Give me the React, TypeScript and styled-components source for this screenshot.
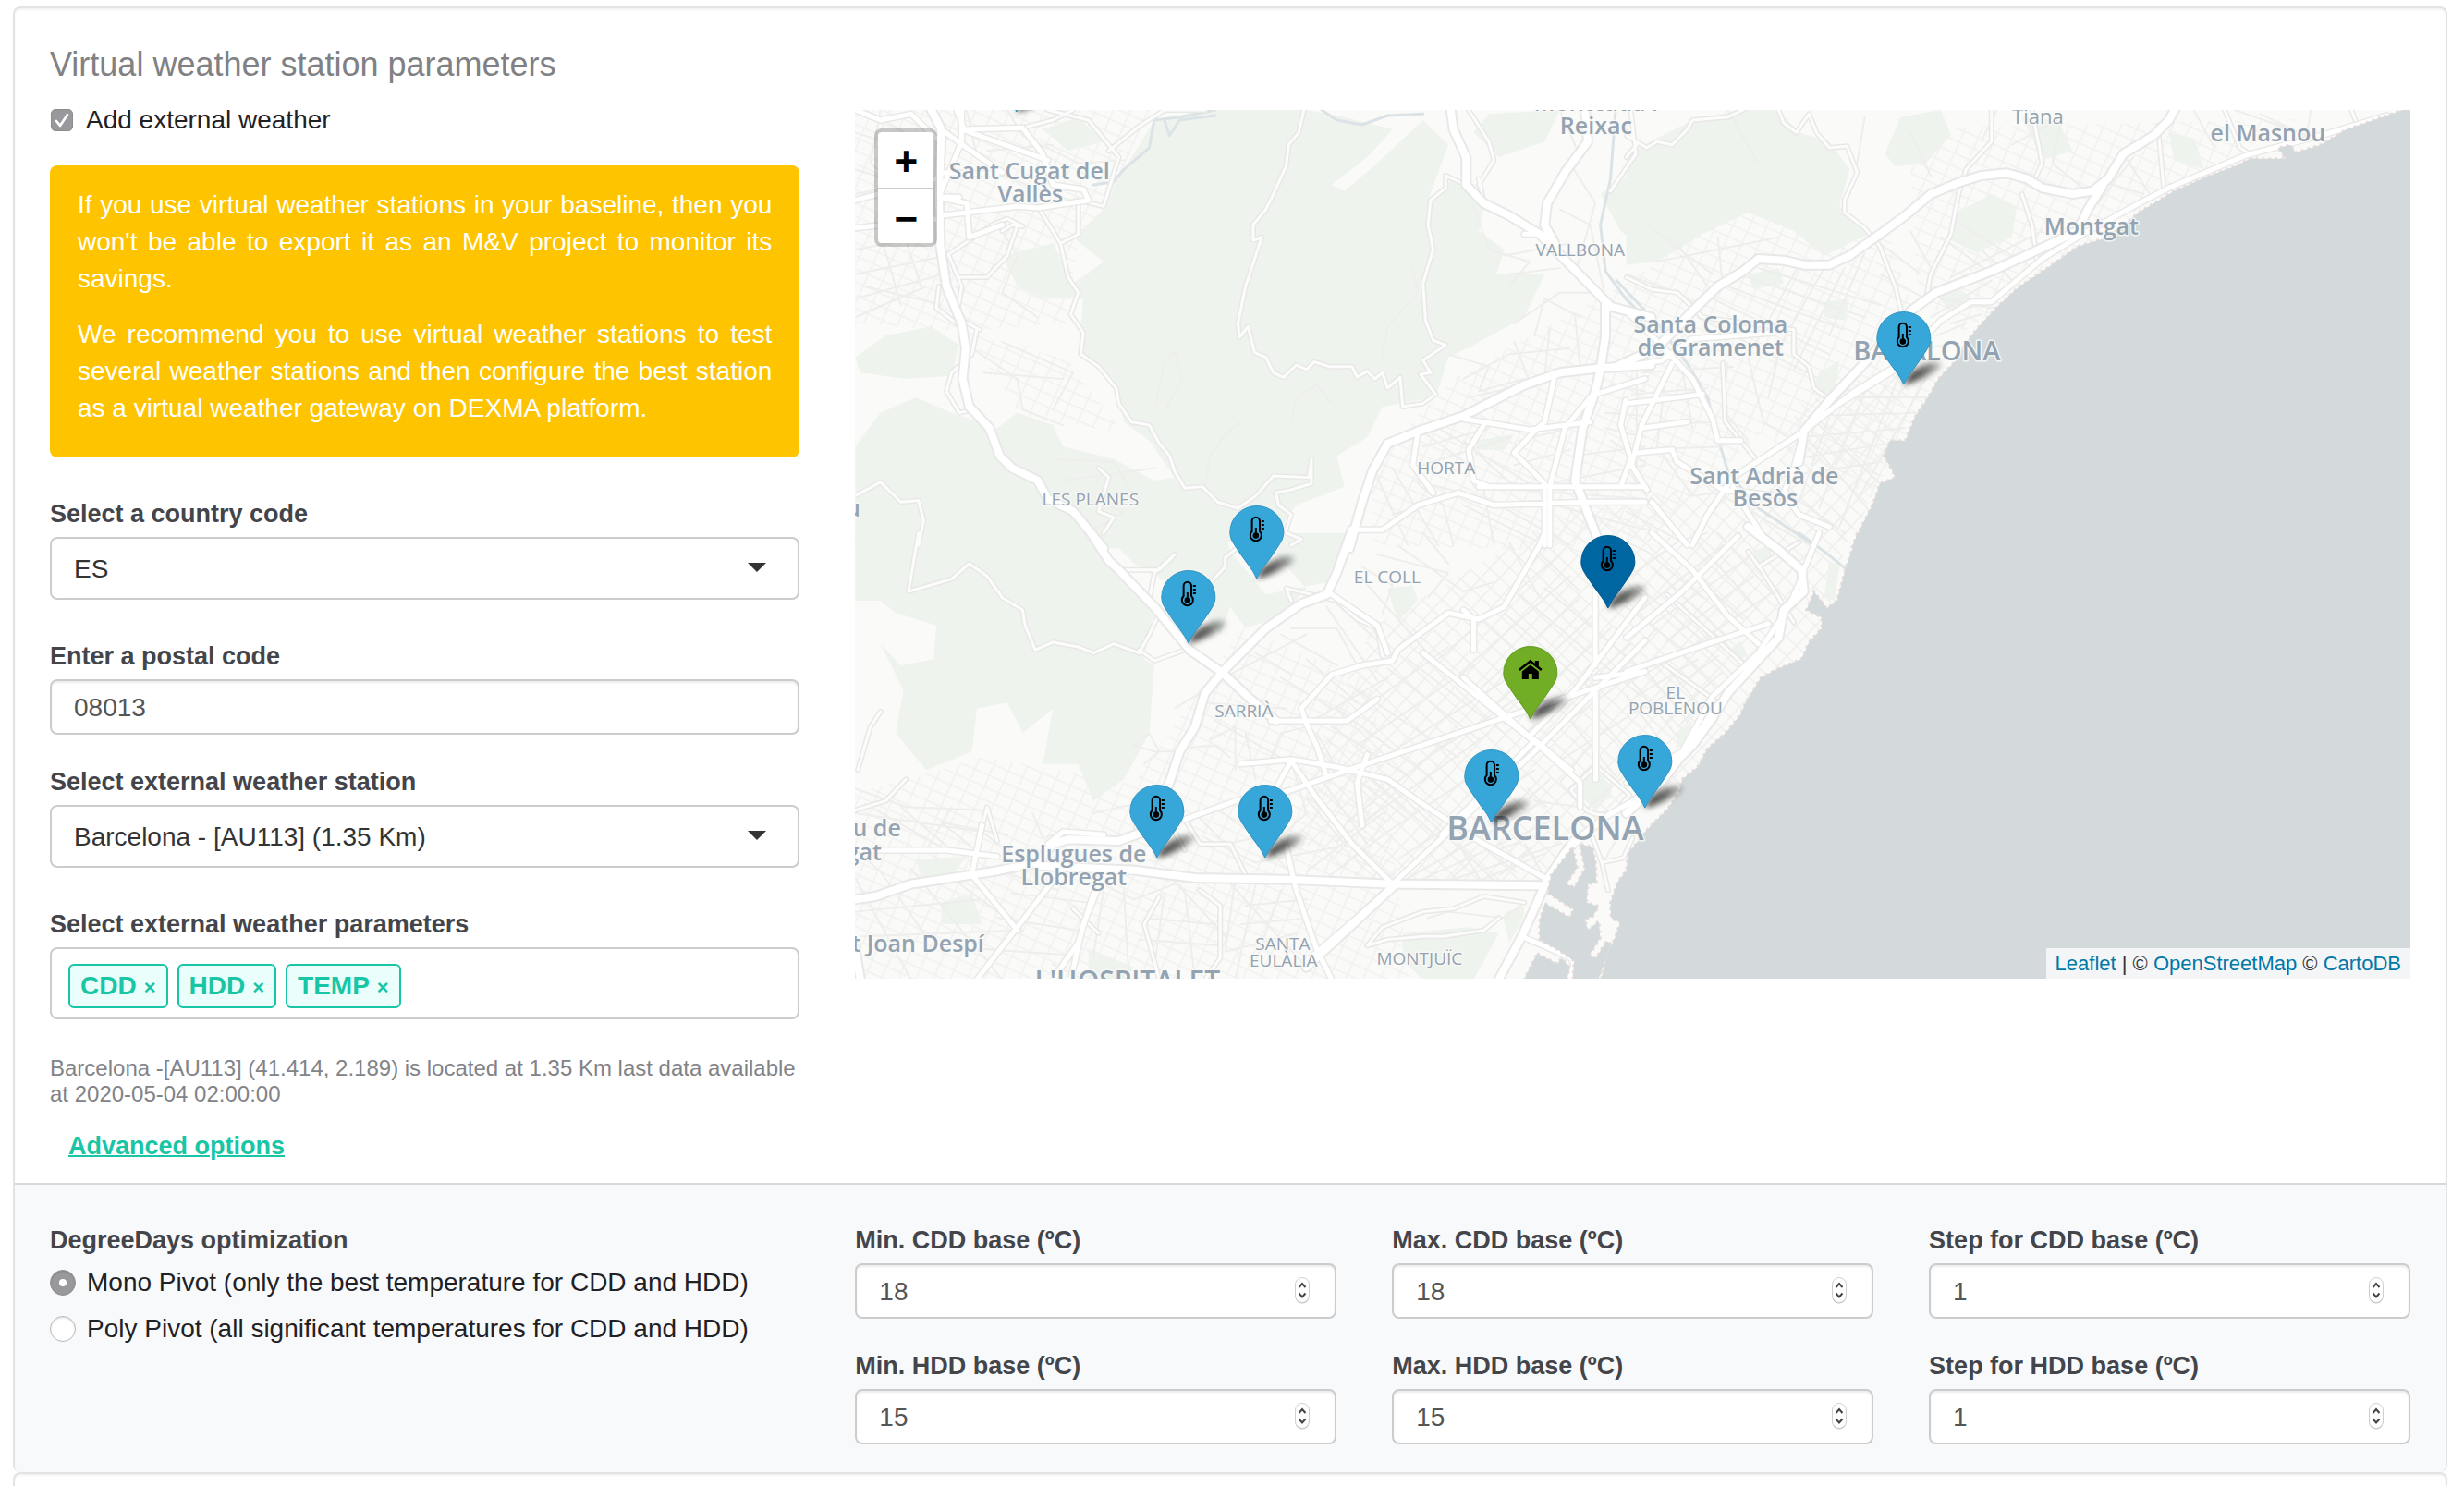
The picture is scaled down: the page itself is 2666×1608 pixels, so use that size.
import React, { useState } from "react";
import styled, { createGlobalStyle, css } from "styled-components";

const GlobalStyle = createGlobalStyle`
  *, *::before, *::after { box-sizing: border-box; }
  body {
    margin: 0;
    background: #fff;
    color: #212529;
    font-family: "Liberation Sans", Arial, Helvetica, sans-serif;
    font-size: 28px;
  }
  input, select, button { font: inherit; margin: 0; }
`;

const Page = styled.main`
  display: flex;
  flex-direction: column;
  min-height: 100vh;
  padding: 7px 18px 0 14px;
`;

const Panel = styled.section<{ $grow?: boolean }>`
  border: 2px solid #e3e3e3;
  border-bottom: 0;
  border-radius: 8px;
  box-shadow: inset 0 2px 2px rgba(0, 0, 0, 0.05);
  overflow: hidden;
  ${(p) =>
    p.$grow &&
    css`
      flex: 1;
      border-bottom-left-radius: 0;
      border-bottom-right-radius: 0;
    `}
`;

const Columns = styled.div`
  display: grid;
  grid-template-columns: repeat(12, minmax(0, 1fr));
  column-gap: 60px;
`;

const Side = styled.div`
  grid-column: span 4;
`;

const Wide = styled.div`
  grid-column: span 8;
`;

const Upper = styled.div`
  padding: 41px 38px 25px;
`;

const Advanced = styled.div`
  padding: 45px 38px 30px;
  border-top: 2px solid #d6d8db;
  background: #f8f9fb;
`;

const Title = styled.h1`
  margin: 0 0 29px;
  color: #808184;
  font-size: 36px;
  font-weight: 400;
  line-height: 40px;
`;

const CheckRow = styled.div`
  display: flex;
  align-items: center;
  gap: 14px;
  height: 22px;
  margin-bottom: 38px;
  padding-left: 1px;
`;

const CheckBoxHolder = styled.span`
  position: relative;
  display: flex;
  svg {
    position: absolute;
    inset: 0;
    pointer-events: none;
  }
`;

const CheckBox = styled.input`
  appearance: none;
  width: 24px;
  height: 24px;
  border: 1px solid #8b8b90;
  border-radius: 5px;
  background: #98989d;
`;

const ChoiceLabel = styled.label`
  color: #1f2124;
  line-height: 22px;
`;

const Alert = styled.div`
  margin-bottom: 46px;
  padding: 23px 30px 13px;
  border-radius: 8px;
  background: #ffc400;
  color: #fff;
  line-height: 40px;
  text-align: justify;
  p {
    margin: 0 0 20px;
  }
`;

const Field = styled.div<{ $after?: number }>`
  display: flex;
  flex-direction: column;
  gap: 10px;
  margin-bottom: ${(p) => p.$after ?? 0}px;
`;

const labelText = css`
  color: #43454a;
  font-size: 27px;
  font-weight: 700;
  line-height: 30px;
`;

const Label = styled.label`
  ${labelText}
`;

const frame = css`
  width: 100%;
  border: 2px solid #ccc;
  border-radius: 8px;
  background: #fff;
`;

const SelectHolder = styled.div`
  position: relative;
  svg {
    position: absolute;
    right: 36px;
    top: 28px;
    pointer-events: none;
  }
`;

const Select = styled.select`
  ${frame}
  appearance: none;
  height: 68px;
  padding: 0 24px;
  color: #333;
`;

const TextInput = styled.input`
  ${frame}
  appearance: textfield;
  height: 60px;
  padding: 2px 24px 0;
  color: #555;
  box-shadow: inset 0 2px 2px rgba(0, 0, 0, 0.075);
  &::-webkit-inner-spin-button,
  &::-webkit-outer-spin-button {
    appearance: none;
    margin: 0;
  }
`;

const TagBox = styled.div`
  ${frame}
  display: flex;
  align-items: flex-start;
  gap: 10px;
  height: 78px;
  padding: 16px 18px 0;
`;

const Tag = styled.span`
  display: flex;
  align-items: center;
  gap: 8px;
  height: 48px;
  padding: 0 11px;
  border: 2px solid #18c5a5;
  border-radius: 6px;
  background: #eafffb;
  color: #18c5a5;
  font-weight: 700;
`;

const TagRemove = styled.button`
  padding: 4px 0 0;
  border: 0;
  background: none;
  color: inherit;
  font-size: 22px;
  line-height: 22px;
`;

const TagEntry = styled.input`
  flex: 1;
  min-width: 0;
  border: 0;
  outline: 0;
  background: none;
`;

const Note = styled.p`
  margin: 0 0 27px;
  color: #828387;
  font-size: 24px;
  line-height: 28px;
`;

const AdvancedLink = styled.a`
  display: block;
  width: fit-content;
  margin-left: 20px;
  color: #18c5a5;
  font-size: 27px;
  font-weight: 700;
  line-height: 30px;
  text-decoration: underline;
  text-decoration-thickness: 2px;
`;

const RadioGroup = styled.fieldset`
  display: flex;
  flex-direction: column;
  gap: 22px;
  margin: 0;
  padding: 0;
  border: 0;
`;

const Legend = styled.legend`
  ${labelText}
  padding: 0;
  margin-bottom: 17px;
`;

const RadioRow = styled.div`
  display: flex;
  align-items: center;
  gap: 12px;
  height: 28px;
`;

const Radio = styled.input`
  appearance: none;
  display: grid;
  place-items: center;
  width: 28px;
  height: 28px;
  border: 1px solid #b9babd;
  border-radius: 50%;
  background: #fff;
  box-shadow: inset 0 1px 2px rgba(0, 0, 0, 0.15);
  &:checked {
    border-color: #929297;
    background: #98989d;
  }
  &:checked::after {
    content: "";
    width: 8px;
    height: 8px;
    border-radius: 50%;
    background: #fff;
  }
`;

const NumberGrid = styled.div`
  display: grid;
  grid-template-columns: repeat(3, minmax(0, 1fr));
  gap: 36px 60px;
`;

const NumberHolder = styled.div`
  position: relative;
  svg {
    position: absolute;
    right: 27px;
    top: 14px;
    pointer-events: none;
  }
`;

const MapFrame = styled.div`
  position: relative;
  height: 940px;
  overflow: hidden;
  background: #fafaf8;
`;

const MapDrawing = styled.svg`
  position: absolute;
  inset: 0;
  width: 100%;
  height: 100%;
`;

const ZoomControl = styled.div`
  position: absolute;
  left: 21px;
  top: 20px;
  border: 4px solid rgba(0, 0, 0, 0.2);
  border-radius: 8px;
  background: #fff;
  background-clip: padding-box;
`;

const ZoomButton = styled.button`
  display: block;
  width: 60px;
  height: 60px;
  padding: 4px 0 0;
  border: 0;
  background: none;
  color: #000;
  font-size: 44px;
  font-weight: 700;
  line-height: 56px;
  & + & {
    border-top: 2px solid #ccc;
  }
`;

const Attribution = styled.div`
  position: absolute;
  right: 0;
  bottom: 0;
  padding: 0 10px;
  background: #f4f5f6;
  color: #333;
  font-size: 22px;
  line-height: 33px;
  a {
    color: #0078a8;
    text-decoration: none;
  }
`;

/* ---------- basemap data: four quadrants, then the harbour ---------- */

type Sheet = {
  transform: string;
  parks: string[];
  sea: string[];
  river: string[];
  streets: string[];
  roads: string[];
  avenues: string[];
  motorways: string[];
};

const sheets: Sheet[] = [
  {
    transform: "translate(-5 -9) scale(.5485 .3333)",
    parks: [
      "M600 60L720 27H900L960 45L1070 90L1020 180L950 270L975 290L1040 200L1130 60L1180 140L1140 320L1190 250L1250 350L1240 420L1290 480L1275 560L1370 560L1330 700L1230 790L1180 830L1155 960L1050 990L1020 1090L960 1150L975 1250L880 1310L850 1380L700 1450H10V1120L60 1010L130 960L200 1010L290 1060L330 1010L400 1050L420 1120L520 1160L600 1230L640 1220L590 1100L540 1040L520 900L450 810L460 640L380 640L330 600L300 500L400 460L440 590L500 520L440 440L500 350L530 250Z",
      "M10 830L70 760L160 730L215 790L200 890L110 900L20 880Z",
      "M1480 300L1568 200V480L1520 420Z",
      "M1230 100L1260 40L1400 27L1370 130L1280 180Z",
      "M1230 1100L1310 1080L1290 1130L1240 1130Z",
      "M380 90L450 50L500 130L430 160Z",
    ],
    sea: [],
    river: [
      "M720 27L650 50L600 60L590 150L540 220L520 260L480 270",
      "M620 60L630 110L650 60L720 45",
      "M930 27L960 60L1010 75L1060 45L1130 40",
      "M1510 27L1500 250L1480 400L1490 550L1530 640L1568 700",
    ],
    streets: [
      "M10 100L160 180M10 220L170 300M30 27L150 140M10 300L160 250M60 27L40 200L170 380M10 420L180 360M230 27L250 180L300 240L450 330M310 27L340 110L450 200L540 190M270 160L400 140M180 430L10 480M190 500L10 560M185 560L10 640M100 400L140 600M60 430L100 660M10 700L150 600M30 600L180 660M300 420L330 500L300 620L370 700M240 800L330 900L340 1000L420 1050M260 880L420 900M300 780L440 880L400 1000",
      "M400 1160L520 1170L560 1280M420 1230L600 1190M440 1280L540 1330L470 1400M600 1000L620 850L640 810L655 900L625 990M700 1250L710 1150L740 1080L770 1040M870 1040L880 960L920 920L950 980M1050 830L1060 730L1120 620L1110 540",
      "M1230 340L1260 480L1340 520L1300 600M1290 500L1420 460M1300 560L1400 540M1310 720L1400 620L1470 620M1350 760L1370 640L1440 700M1180 820L1260 860L1240 940L1330 900M1210 900L1300 820L1420 800M1220 960L1440 880M1310 780L1340 910M1380 740L1370 890M1430 700L1440 860M1400 27L1440 180M1420 200L1470 330L1430 560M1400 350L1460 400M1460 400L1490 640",
      "M1120 1060L1220 1180L1230 1250L1568 1290M1150 1050L1340 1240M1210 1100L1310 1250M1130 1120L1260 1060M1130 1180L1300 1090M1110 1230L1210 1270L1070 1340M1120 1240L1170 1310L1190 1440M1250 1260L1270 1440M1040 1220L1100 1440M1070 1190L1160 1440M1320 1100L1420 1060M1310 1180L1420 1130M1380 1240L1568 1180M1490 1060L1568 1090M1500 1100L1568 1170M1430 1150L1568 1120M1500 920L1568 940M1490 1010L1568 1020M1270 1300L1420 1440M1210 1310L1370 1440M1390 1310L1568 1390",
    ],
    roads: [
      "M895 27L885 100L865 140L860 210L835 300L820 350L795 400L795 450L812 440L800 500L780 600L765 720L768 765L785 730L798 815L820 830L835 880L855 895L880 855L900 870L915 845L945 860L990 860L1000 895L1020 875L1035 900L1050 880L1060 930L1085 895L1090 990L1130 980L1155 950L1125 885L1145 880L1130 840L1175 790L1150 775L1135 710L1130 590L1150 480L1140 400L1145 320L1175 280V240L1215 270",
      "M300 420L320 400L340 405L310 380L280 400L190 500L185 560M370 340L415 460L430 570L450 620L435 690L460 750L455 820L490 860L525 930L530 980L555 1040L590 1050L610 1110L630 1150L640 1200L660 1255L695 1250L725 1300L765 1320L800 1280L835 1215L905 1220L910 1160V1240L870 1260L840 1270L845 1310L870 1340L860 1390",
      "M10 1280L60 1235L100 1300L135 1295L145 1360L135 1440M390 27L470 60L530 180L500 340L450 320M450 330V430L415 460M215 570L270 570L310 500L330 400",
      "M700 27L620 27L570 80L510 160M340 85L400 60L440 27M1220 27L1260 130L1270 190L1240 270M1250 330L1240 250M1540 27L1550 170L1500 290",
      "M195 500L220 600L210 700L255 740M175 600L170 670L210 720M250 740L240 820L200 880L190 940L215 1010L245 1000M490 1190L510 1220L490 1330L520 1350L500 1400",
    ],
    avenues: [
      "M210 27L225 90L340 85L380 170L400 270L460 285L470 320L370 345L330 340L180 370M180 90L230 150L300 230M10 27L60 60L120 40L170 120M220 27V130L175 310L230 330L235 440L300 400M220 90L390 190M180 230L290 235M180 310L215 310",
      "M10 320L170 250M10 410L180 380M1380 430L1330 430M1390 890L1370 1040L1350 1070L1310 1140L1370 1240V1440M1210 1030L1340 1065L1460 1040M1470 940L1410 1060L1380 1250V1440M1240 1250L1568 1250M1000 1390L1050 1390L1120 1310L1200 1270L1270 1310L1450 1300L1568 1300M1120 1070L1110 1180L1150 1270M1568 900L1470 950M1530 970L1520 1050L1540 1160L1520 1250M1250 1050L1220 1130L1230 1230L1260 1250",
    ],
    motorways: [
      "M160 27L180 90L175 300L178 470L190 600L220 720L228 800L222 900L235 990L275 1060L295 1150L320 1190L370 1230L390 1290L440 1330L470 1390L500 1450",
      "M1185 27L1190 90L1215 180L1215 270L1250 330L1300 370L1360 430L1420 530L1500 665L1580 700",
      "M1450 27L1455 130L1410 230L1375 330L1370 400L1390 460",
      "M1490 660V760L1480 870L1470 940L1445 1060L1430 1230L1470 1400L1480 1450",
      "M1580 855L1480 865L1400 880L1330 920L1210 1020L1120 1070L1060 1110L1030 1200L1010 1300L985 1450",
    ],
  },
  {
    transform: "translate(835 -9) scale(.5485 .3333)",
    parks: [
      "M0 170L130 60L220 27H300L340 100L400 130L440 220L420 340L475 430L390 500L330 420L240 360L150 430L60 520L0 530Z",
      "M510 170L540 50L620 27L640 110L590 200L530 210Z",
      "M650 360L720 300L770 340L760 440L690 490L640 450Z",
      "M780 50L850 60L880 160L820 190Z",
      "M610 620L650 600L700 660L640 690Z",
      "M380 880L420 840L410 960L370 930Z",
      "M240 560L300 540L310 590L250 610Z",
      "M1070 100L1120 120L1140 220L1080 190Z",
      "M390 650L440 640L430 710L390 700Z",
    ],
    sea: [
      "M1560 10L1500 45L1420 90L1370 140L1320 165L1310 140L1285 150L1300 185L1230 185L1200 210L1150 240L1080 290L1010 360L950 440L890 470L830 540L775 600L735 660L695 730L670 780L650 840L615 900L595 960L570 1020L550 1100L520 1100L508 1150L525 1200L530 1220L500 1240L485 1310L460 1390L445 1445H1580V10Z",
    ],
    river: ["M-20 580L60 720L120 850L160 960L180 1090L200 1200L260 1320L370 1440"],
    streets: [
      "M0 560L80 610L130 650M40 400L170 560M100 460L160 600M180 440L190 600M60 520L300 440M200 27L260 200M470 50L450 250M600 240L560 100M700 130L730 27M760 140L850 60M860 50L840 200L900 280M980 170L1040 320M940 260L1020 300M930 330L1000 180M1120 30L1160 150M1200 27L1380 130M1250 40L1340 110M1350 27L1340 130",
      "M200 600L430 740M170 640L400 820M140 700L380 900M220 560L470 700M260 540L500 660M340 530L250 800M390 540L290 830M430 540L330 870M470 490L400 760M500 460L580 560M560 420L600 540M620 440L720 560M660 400L780 520M700 480L760 580M640 570L820 420M600 700L720 580M620 640L760 680M500 560L590 640",
      "M390 960L600 960M360 1020L570 1010M340 1090L550 1060M330 1160L510 1110M300 1220L500 1170M420 930L340 1300M480 900L380 1320M540 880L420 1380M590 900L460 1280M360 1100L480 1330M380 1050L500 1240M240 1180L430 1400M190 1280L360 1440M30 880L210 860M10 950L160 930M20 1050L170 1040M10 1130L190 1120M60 1120L130 1280L180 1270M20 870V1240M80 860L60 1120M110 870L130 1060M0 1190L40 1280M200 850L190 1000L240 1100M240 830L270 1040L320 1090M300 820L280 960M0 1330L120 1440",
      "M640 720L700 690M610 760L670 720M600 800L650 780M680 660L720 670",
    ],
    roads: [
      "M0 110L40 150L60 130L90 140L120 90L130 60L200 50L230 27M300 27L310 70L335 100L360 40L375 100L400 150L435 145L455 230L430 320L430 360L470 410L500 470L530 600L545 700M720 27L720 130L670 220L655 300L640 430L600 560L590 650M800 27L820 200L800 270M780 300L800 400L810 520M0 180L20 140L0 70M1180 27L1210 150L1240 180M1050 110L1060 280M1430 27L1440 70",
      "M0 570L50 610L100 620L150 700L240 720L330 740L330 820L360 860L370 930L410 980M190 850L195 1040L240 1130L260 1170",
    ],
    avenues: [
      "M1500 45L1380 105L1220 175L1070 280L1000 340L900 430L820 510L720 650H680L620 710L540 850L450 940L350 1070L210 1220L160 1340L130 1440M0 680L80 810L130 900L170 1030L180 1100L225 1100M0 860L70 840L130 770L290 750M90 850L30 1050L10 1180L40 1260M210 1250L230 1310L280 1440M0 980L150 950M30 1060L120 1040M350 1070L330 1190L310 1270L340 1340L400 1380M50 1300L120 1440",
      "M20 1140L90 1130L100 1170L190 1260L300 1280M420 980L540 860L600 740",
    ],
    motorways: [
      "M-20 860L60 800L130 680L180 600L230 550L260 510L310 515L350 530L400 530L440 500L500 430L550 370L600 300L660 260L700 240L750 232L790 250L820 280L880 300L920 290L950 250L980 170L1040 110L1070 60L1085 15",
      "M940 270L910 350L890 420L800 490L720 550L610 620L560 680L480 830L400 970L350 1070L340 1170",
    ],
  },
  {
    transform: "translate(-5 461) scale(.5485 .3333)",
    parks: [
      "M10 -10H480L520 100L600 230L580 400L600 420L590 640L540 790L480 860L450 740L380 740L400 560L340 640L310 540L250 560L240 700L150 760L90 640L105 500L60 350L100 420L165 400L170 290L90 250L60 210L10 210Z",
      "M500 -10H740L750 50L820 190L940 150L980 -10H860L840 60L900 170L850 260L780 300L750 230L730 320L670 190L560 90Z",
      "M1060 170L1110 160L1120 210L1080 280Z",
      "M1430 830L1470 770L1500 840L1470 890Z",
      "M1090 1290L1220 1270L1280 1290L1230 1440H1130L1090 1380Z",
      "M180 1190L240 1160L260 1260L180 1260Z",
      "M470 1340L560 1400L540 1440H470Z",
      "M130 1050L230 1040L200 1100L140 1110Z",
    ],
    sea: [],
    river: [],
    streets: [
      "M10 820L110 880L270 890M10 900L260 960M30 870L180 1010M100 880L200 1020M200 880L150 1020M270 890L260 960L300 1010M360 900L380 980L420 960M10 1110L120 1440M60 1090L150 1300M120 1080L300 1440M10 1220L260 1180M20 1300L340 1280M200 1110L340 1280M300 1090L410 1150M320 1160L470 1190M290 1240L450 1280M250 1340L430 1360M240 1010L180 930L310 970",
      "M480 900L560 870L560 960M460 1100L560 1180L640 1130M500 1150L480 1360M540 1150L550 1440M620 1160L600 1400M660 1150L680 1440M580 1240L720 1260M570 1310L730 1330M760 1110L740 1350L880 1290M800 1130L760 1440M850 1150L800 1380M780 1200L900 1180M770 1260L910 1240M740 1110L900 1400M640 1120L740 1300",
      "M680 900L740 1000L860 960L900 900L870 730M700 980L800 1060L960 1010M720 880L820 1000M770 900L860 1080M900 850L980 1010M930 790L1020 1000M970 750L1100 920M1010 760L1160 980M1050 790L1200 1010M940 1110L1060 960L1300 700M960 990L1260 640M900 1090L1050 900M980 930L1200 640M1090 1120L1370 860M1080 1050L1350 760M1120 1120L1390 920M1180 1120L1400 1000M1240 1120L1370 1030",
      "M640 560L760 440L900 320M690 540L860 560M720 600L850 720M710 660L760 620L760 760M780 640L800 790M830 720L850 640L900 620M920 640L970 780M850 460L950 560M900 400L1000 540M800 380L870 450M850 320L960 420M870 300L960 300L1000 420M960 220L1060 370M940 230L1040 470M1000 120L1150 400M1100 400L1290 640M1060 430L1240 660M1000 500L1200 720M960 560L1150 790M950 620L1100 780M900 610L1060 460M980 600L1180 360M1000 680L1230 420M1050 720L1290 470M1120 740L1340 500M1010 100L1070 160L1050 250M1040 60L1180 120L1140 200M1080 30L1210 180L1270 150M1130 -10L1180 90",
      "M1240 500L1440 200M1260 570L1470 250M1290 610L1500 300M1340 630L1540 350M1200 450L1420 130M1160 400L1400 60M1250 280L1400 500M1290 250L1470 510M1320 190L1560 520M1370 170L1568 440M1350 40L1440 180M1300 20L1360 200M1350 680L1568 420M1390 740L1568 550M1420 600L1510 780M1460 560L1568 760M1480 640L1400 800L1450 890L1540 760M1350 860L1440 880M1380 790L1340 850",
      "M640 700L600 700L560 680L590 640L610 700L580 740M640 690L720 680L750 720M400 1390L460 1440M1140 1240L1180 1220L1290 1240L1330 1190M10 1020L60 1090",
    ],
    roads: [
      "M135 -10L115 180L200 140L235 90L270 130L300 200L340 240L345 290L365 370L400 345L450 360L480 380L520 350L570 380L590 320L610 250L590 210L600 120L640 60M570 370L600 405L660 370M10 890L70 860L110 790M15 760L40 620L60 570M500 70L540 110L610 110L635 70M700 170L740 100L740 70L800 -10M860 -10L890 10L870 30M870 210L860 170L960 210L1000 270L1040 300L1050 390M260 950L270 880L290 990",
      "M440 1210L490 1290M560 890L620 900L660 1020M660 920L690 1000L750 1000L780 1100M690 1150L730 1200V1370L700 1440M610 1170L580 1260L610 1440M1330 1190L1250 1170L1190 1210L1130 1220L1050 1270L1020 1330L1060 1310L1130 1300L1170 1300L1250 1280L1280 1240",
    ],
    avenues: [
      "M390 1000L420 960L500 970M480 1160L450 1320L400 1440M490 1140L460 1260L435 1440M400 1120L250 1440M330 1280L240 1100L260 940M65 1020L190 1020L290 1040M10 1020L65 1020M660 920L760 860L860 830L1000 750L1290 590L1568 440M770 740L870 725L960 750L1060 790L1120 860L1240 990L1370 1110M840 820L870 730L920 850L990 1000L1070 1130M830 600H900L980 600L1040 530M900 610L890 560L950 450L1010 420L1070 405L1080 370L1180 250L1240 270L1290 230L1360 30L1370 -10M940 780L920 680L900 610M1010 940L1000 800L1020 710",
      "M1470 420V0M1470 700V510M1070 1130L1350 700L1568 340M860 1010L880 1150L920 1340L950 1440M1060 1130L1350 1140M900 1380L1070 1140M1380 1100L1430 1000L1500 900L1568 840M1210 240L1230 270V370M950 190L1040 290L1060 380M1210 460L1440 800L1440 880M1130 380L1420 760M1340 650L1430 500L1568 200M1568 440L1470 460",
    ],
    motorways: [
      "M475 -10L510 80L530 110L600 230L670 370L735 445L790 530L840 600",
      "M990 -20L960 120L940 190L890 220L820 300L735 440L700 510L680 620L650 700L630 800L580 960L530 990L430 985L400 1000L370 1060L280 1090L120 1130L50 1170L10 1180",
      "M370 1070L560 1085L680 1110L860 1115L1070 1130L1360 1135",
      "M10 1340L20 1440M900 1400L1070 1140",
    ],
  },
  {
    transform: "translate(835 461) scale(.5485 .3333)",
    parks: [
      "M250 50L280 30L290 80L260 90Z",
      "M400 80L420 100L410 210L390 200Z",
      "M205 370L225 340L240 390L220 400Z",
      "M240 400L265 390L245 440Z",
      "M100 640L130 600L120 670L100 690Z",
    ],
    sea: [
      "M455 -10L450 20L435 90L425 150L415 210L395 235L370 180L355 240L385 265L385 300L360 345L345 400L300 430L265 460L235 540L225 580L195 640L160 690L140 750L110 790L105 830L75 900L50 940V1470H1580V-10Z",
    ],
    river: ["M340 -10L390 50L435 110"],
    streets: [
      "M0 20L40 50L150 200M0 140L100 20L160 -10M30 240L190 30M50 290L250 60M80 340L250 130M110 380L300 170M0 400L60 300M0 230L120 380M20 160L150 340M50 100L200 330M90 60L230 270M140 20L260 240M180 -10L290 190M0 480L100 390M20 520L140 400M40 560L180 390M0 450L100 650M30 420L120 600M60 390L150 560M100 370L180 500M140 340L210 450M170 310L240 420M80 600L190 440M100 620L230 420M0 520L80 690",
    ],
    roads: [
      "M240 50L270 120L330 280M260 100L300 60L340 20M80 190L240 430M60 400L180 540",
    ],
    avenues: [
      "M0 330L110 180L220 0M0 440L160 350L280 285M50 -10L130 110L200 260L260 350M280 20L330 90L350 120L320 230L260 380L170 520L110 700L0 800M380 -10L350 110",
    ],
    motorways: ["M240 -30L300 45L345 110L350 180L310 240L300 330L250 420L200 510L170 590L130 680L80 760"],
  },
  {
    transform: "translate(635 581) scale(.3333)",
    parks: ["M440 450L500 400L550 450V490L510 510L450 490Z", "M210 860L270 840L265 880L220 960L200 880Z"],
    sea: [
      "M760 500L700 560L660 600L630 640L605 670L600 725L570 765L548 830L550 880L580 895L560 950L540 990L515 1090H900V500Z",
      "M425 650L440 715L405 770L430 780L465 720L448 640L490 650L500 700L502 765L475 770L470 830L510 842L490 875L465 885L475 920L510 890L515 945L480 1000L500 1012L535 955L550 965L505 1090H425L430 1020L380 985L318 950V890L335 832L415 878L428 852L345 800L355 740Z",
      "M310 995L375 1028L390 1010L415 1040L405 1090H262Z",
    ],
    river: [],
    streets: [
      "M0 690L60 650L140 780M0 780L100 690M50 640L180 770M120 640L240 730M180 660L320 610M190 740L290 650M270 640L330 740M530 690L570 620M280 460L340 520M440 560L480 600",
    ],
    roads: ["M420 465L500 385L610 480L570 530Q520 560 470 530ZM520 700L590 685L620 620M490 620L520 700L540 790"],
    avenues: [
      "M260 940L330 970L420 1010L430 1030L410 1090M500 150V430M300 300L420 400M300 305L200 410L0 610",
      "M430 630L520 560L620 500L700 440",
    ],
    motorways: ["M430 630L400 670L340 760L310 830L260 940L180 1090", "M600 540L720 430L850 260L900 190"],
  },
];

type Place = { text: string; x: number; y: number; size: number; weight?: number; anchor?: "middle" | "end" };

const places: Place[] = [
  { text: "Sant Cugat del", x: 189, y: 75, size: 25 },
  { text: "Vallès", x: 190, y: 100, size: 25 },
  { text: "Montcada i", x: 802, y: 1, size: 25 },
  { text: "Reixac", x: 802, y: 26, size: 25 },
  { text: "VALLBONA", x: 785, y: 158, size: 19, weight: 400 },
  { text: "HORTA", x: 640, y: 394, size: 19, weight: 400 },
  { text: "LES PLANES", x: 255, y: 428, size: 19, weight: 400 },
  { text: "Sant Cugat u", x: 6, y: 440, size: 25, anchor: "end" },
  { text: "EL COLL", x: 576, y: 512, size: 19, weight: 400 },
  { text: "SARRIÀ", x: 421, y: 657, size: 19, weight: 400 },
  { text: "Sant Feliu de", x: 50, y: 786, size: 25, anchor: "end" },
  { text: "Llobregat", x: 29, y: 812, size: 25, anchor: "end" },
  { text: "Esplugues de", x: 237, y: 814, size: 25 },
  { text: "Llobregat", x: 237, y: 839, size: 25 },
  { text: "Sant Joan Despí", x: 140, y: 911, size: 25, anchor: "end" },
  { text: "L'HOSPITALET", x: 295, y: 953, size: 30 },
  { text: "SANTA", x: 463, y: 909, size: 19, weight: 400 },
  { text: "EULÀLIA", x: 464, y: 927, size: 19, weight: 400 },
  { text: "MONTJUÏC", x: 611, y: 925, size: 19, weight: 400 },
  { text: "BARCELONA", x: 747, y: 790, size: 36 },
  { text: "BADALONA", x: 1160, y: 271, size: 29 },
  { text: "Santa Coloma", x: 926, y: 241, size: 25 },
  { text: "de Gramenet", x: 926, y: 266, size: 25 },
  { text: "Sant Adrià de", x: 984, y: 405, size: 25 },
  { text: "Besòs", x: 985, y: 429, size: 25 },
  { text: "Montgat", x: 1338, y: 135, size: 25 },
  { text: "el Masnou", x: 1529, y: 34, size: 25 },
  { text: "Tiana", x: 1280, y: 15, size: 22, weight: 400 },
  { text: "EL", x: 888, y: 637, size: 19, weight: 400 },
  { text: "POBLENOU", x: 888, y: 654, size: 19, weight: 400 },
];

type PinKind = "station" | "selected" | "home";
const pins: { x: number; y: number; kind: PinKind }[] = [
  { x: 175, y: -77, kind: "station" },
  { x: 1135, y: 218, kind: "station" },
  { x: 435, y: 428, kind: "station" },
  { x: 815, y: 460, kind: "selected" },
  { x: 361, y: 498, kind: "station" },
  { x: 731, y: 580, kind: "home" },
  { x: 855, y: 676, kind: "station" },
  { x: 689, y: 692, kind: "station" },
  { x: 327, y: 730, kind: "station" },
  { x: 444, y: 730, kind: "station" },
];

const pinFill: Record<PinKind, string> = { station: "#37a7da", selected: "#0066a2", home: "#71ae26" };
const pinEdge: Record<PinKind, string> = { station: "#2f93c2", selected: "#005a90", home: "#639b20" };

type LineKind = "streets" | "roads" | "avenues" | "motorways" | "river";

function Lines({ kind, color, width }: { kind: LineKind; color: string; width: number }) {
  return (
    <g fill="none" stroke={color} strokeWidth={width} strokeLinejoin="round" strokeLinecap="round">
      {sheets.map((s) => (
        <g key={s.transform} transform={s.transform}>
          {s[kind].map((d) => (
            <path key={d} d={d} vectorEffect="non-scaling-stroke" />
          ))}
        </g>
      ))}
    </g>
  );
}

function Parks() {
  return (
    <g fill="#eef3ee">
      {sheets.map((s) => (
        <g key={s.transform} transform={s.transform}>
          {s.parks.map((d) => (
            <path key={d} d={d} />
          ))}
        </g>
      ))}
    </g>
  );
}

function Sea() {
  return (
    <>
      <g fill="none" stroke="#ecdcdb" strokeWidth="3" strokeDasharray="3 4">
        {sheets.map((s) => (
          <g key={s.transform} transform={s.transform}>
            {s.sea.map((d) => (
              <path key={d} d={d} vectorEffect="non-scaling-stroke" />
            ))}
          </g>
        ))}
      </g>
      <g fill="#d4dadc">
        {sheets.map((s) => (
          <g key={s.transform} transform={s.transform}>
            {s.sea.map((d) => (
              <path key={d} d={d} />
            ))}
          </g>
        ))}
      </g>
    </>
  );
}

function Pin({ x, y, kind }: { x: number; y: number; kind: PinKind }) {
  return (
    <g transform={`translate(${x} ${y})`}>
      <path d="M0 79C4 66 16 58 32 55C42 54 44 59 34 65C22 72 8 78 0 79Z" fill="url(#pin-fade)" filter="url(#pin-shadow)" />
      <path
        d="M0 79C-5 68 -13 60 -20 49C-26 40 -29 36 -29 29A29 28.5 0 0 1 29 29C29 36 26 40 20 49C13 60 5 68 0 79Z"
        fill={pinFill[kind]}
        stroke={pinEdge[kind]}
        strokeWidth="1"
      />
      {kind === "home" ? (
        <g>
          <path d="M-12 26L0 16.5L12 26" fill="none" stroke="#000" strokeWidth="2.6" />
          <path d="M5 16H9V24L5 20Z" />
          <path d="M-9 27.5L0 20.5L9 27.5V36H2V30H-2V36H-9Z" />
        </g>
      ) : (
        <g>
          <path d="M-5.2 28V17A4.2 4.2 0 0 1 3.2 17V28A6 6 0 1 1 -5.2 28Z" fill="none" stroke="#000" strokeWidth="2" />
          <circle cx="-1" cy="32.6" r="3.3" />
          <path d="M-1 24V32" stroke="#000" strokeWidth="2" />
          <path d="M5 17H8M5 21H8M5 25H8" stroke="#000" strokeWidth="2" />
        </g>
      )}
    </g>
  );
}

function StationMap() {
  return (
    <MapFrame>
      <MapDrawing viewBox="0 0 1683 940" preserveAspectRatio="xMidYMid slice" role="img" aria-label="Map of weather stations">
        <defs>
          <pattern id="eixample" width="15" height="15" patternUnits="userSpaceOnUse" patternTransform="rotate(-47)">
            <path d="M0 0H15M0 0V15" stroke="#efefed" strokeWidth="3" />
          </pattern>
          <pattern id="blocks" width="17" height="13" patternUnits="userSpaceOnUse" patternTransform="rotate(24)">
            <path d="M0 0H17M0 0V13" stroke="#f1f1ef" strokeWidth="3" />
          </pattern>
          <linearGradient id="pin-fade">
            <stop offset="0" stopColor="#000" stopOpacity=".75" />
            <stop offset=".5" stopColor="#000" stopOpacity=".6" />
            <stop offset="1" stopColor="#000" stopOpacity=".2" />
          </linearGradient>
          <filter id="pin-shadow" x="-30%" y="-60%" width="160%" height="220%">
            <feGaussianBlur stdDeviation="3" />
          </filter>
        </defs>
        <rect width="1683" height="940" fill="#fafaf8" />
        <g fill="url(#blocks)">
          <path d="M0 0H320L270 110L240 150L230 230L110 240L0 230Z" />
          <path d="M120 240L230 270L290 350L180 330Z" />
          <path d="M650 290L830 190L1000 80L1120 140L1170 290L1100 420L980 350L840 480L560 470L560 380Z" />
          <path d="M0 740L140 700L300 730L420 560L560 620L600 940H0Z" />
          <path d="M1140 20L1560 10L1400 100L1200 240L1150 200Z" />
        </g>
        <path d="M500 690L560 560L780 430L960 400L1080 440L1040 600L880 740L780 800L740 840L560 840L480 790Z" fill="url(#eixample)" />
        <path d="M1020 320L1160 260L1130 330L1080 470L980 440Z" fill="url(#eixample)" />
        <Parks />
        <Lines kind="river" color="#dce3e6" width={3} />
        <Lines kind="streets" color="#eeeeec" width={2} />
        <Lines kind="roads" color="#e8e8e7" width={6} />
        <Lines kind="roads" color="#fcfcfc" width={3} />
        <Lines kind="avenues" color="#e9e9e8" width={8} />
        <Lines kind="motorways" color="#e8e8e8" width={12} />
        <Lines kind="avenues" color="#fff" width={5} />
        <Lines kind="motorways" color="#fff" width={8} />
        <Sea />
        <g
          fill="#94a3b1"
          stroke="#fafaf8"
          strokeOpacity=".8"
          strokeWidth="3"
          strokeLinejoin="round"
          paintOrder="stroke"
          fontFamily='"Open Sans", "Noto Sans", sans-serif'
        >
          {places.map((p) => (
            <text key={p.text + p.x} x={p.x} y={p.y} fontSize={p.size} fontWeight={p.weight ?? 600} textAnchor={p.anchor ?? "middle"}>
              {p.text}
            </text>
          ))}
        </g>
        {pins.map((p) => (
          <Pin key={`${p.x}-${p.y}`} {...p} />
        ))}
      </MapDrawing>
      <ZoomControl>
        <ZoomButton type="button" aria-label="Zoom in">+</ZoomButton>
        <ZoomButton type="button" aria-label="Zoom out">−</ZoomButton>
      </ZoomControl>
      <Attribution>
        <a href="#leaflet">Leaflet</a> | © <a href="#osm">OpenStreetMap</a> © <a href="#cartodb">CartoDB</a>
      </Attribution>
    </MapFrame>
  );
}

function Dropdown({ id, label, value, after }: { id: string; label: string; value: string; after: number }) {
  return (
    <Field $after={after}>
      <Label htmlFor={id}>{label}</Label>
      <SelectHolder>
        <Select id={id} defaultValue={value}>
          <option>{value}</option>
        </Select>
        <svg width="20" height="10" viewBox="0 0 20 10" aria-hidden="true">
          <path d="M0 0H20L10 10Z" fill="#333" />
        </svg>
      </SelectHolder>
    </Field>
  );
}

function NumberField({ id, label, value }: { id: string; label: string; value: number }) {
  return (
    <Field>
      <Label htmlFor={id}>{label}</Label>
      <NumberHolder>
        <TextInput id={id} type="number" defaultValue={value} />
        <svg width="20" height="32" viewBox="0 0 20 32" aria-hidden="true">
          <rect x="2.5" y="2.5" width="15" height="27" rx="7.5" fill="#bbb" />
          <rect x="2.5" y="1.5" width="15" height="27" rx="7.5" fill="#fff" stroke="#d0d0d0" />
          <path d="M6.5 12L10 8L13.5 12M6.5 18.5L10 22.5L13.5 18.5" fill="none" stroke="#444" strokeWidth="2" />
        </svg>
      </NumberHolder>
    </Field>
  );
}

const bases = [
  { id: "min-cdd", label: "Min. CDD base (ºC)", value: 18 },
  { id: "max-cdd", label: "Max. CDD base (ºC)", value: 18 },
  { id: "step-cdd", label: "Step for CDD base (ºC)", value: 1 },
  { id: "min-hdd", label: "Min. HDD base (ºC)", value: 15 },
  { id: "max-hdd", label: "Max. HDD base (ºC)", value: 15 },
  { id: "step-hdd", label: "Step for HDD base (ºC)", value: 1 },
];

export default function App() {
  const [tags, setTags] = useState(["CDD", "HDD", "TEMP"]);
  const [external, setExternal] = useState(true);

  return (
    <>
      <GlobalStyle />
      <Page>
        <Panel>
          <Upper>
            <Title>Virtual weather station parameters</Title>
            <Columns>
              <Side>
                <CheckRow>
                  <CheckBoxHolder>
                    <CheckBox id="external" type="checkbox" checked={external} onChange={(e) => setExternal(e.target.checked)} />
                    {external && (
                      <svg width="24" height="24" viewBox="0 0 24 24" aria-hidden="true">
                        <path d="M6 13L10 18L18 6" fill="none" stroke="#fff" strokeWidth="2.6" strokeLinecap="round" strokeLinejoin="round" />
                      </svg>
                    )}
                  </CheckBoxHolder>
                  <ChoiceLabel htmlFor="external">Add external weather</ChoiceLabel>
                </CheckRow>
                <Alert role="note">
                  <p>
                    If you use virtual weather stations in your baseline, then you won't be able to export it as an M&amp;V project to monitor its
                    savings.
                  </p>
                  <p>
                    We recommend you to use virtual weather stations to test several weather stations and then configure the best station as a virtual
                    weather gateway on DEXMA platform.
                  </p>
                </Alert>
                <Dropdown id="country" label="Select a country code" value="ES" after={46} />
                <Field $after={36}>
                  <Label htmlFor="postal">Enter a postal code</Label>
                  <TextInput id="postal" type="text" defaultValue="08013" />
                </Field>
                <Dropdown id="station" label="Select external weather station" value="Barcelona - [AU113] (1.35 Km)" after={46} />
                <Field $after={39}>
                  <Label htmlFor="parameters">Select external weather parameters</Label>
                  <TagBox>
                    {tags.map((t) => (
                      <Tag key={t}>
                        {t}
                        <TagRemove type="button" aria-label={`Remove ${t}`} onClick={() => setTags(tags.filter((o) => o !== t))}>
                          ×
                        </TagRemove>
                      </Tag>
                    ))}
                    <TagEntry id="parameters" type="text" />
                  </TagBox>
                </Field>
                <Note>Barcelona -[AU113] (41.414, 2.189) is located at 1.35 Km last data available at 2020-05-04 02:00:00</Note>
                <AdvancedLink href="#advanced">Advanced options</AdvancedLink>
              </Side>
              <Wide>
                <StationMap />
              </Wide>
            </Columns>
          </Upper>
          <Advanced id="advanced">
            <Columns>
              <Side>
                <RadioGroup>
                  <Legend>DegreeDays optimization</Legend>
                  <RadioRow>
                    <Radio id="mono" type="radio" name="pivot" defaultChecked />
                    <ChoiceLabel htmlFor="mono">Mono Pivot (only the best temperature for CDD and HDD)</ChoiceLabel>
                  </RadioRow>
                  <RadioRow>
                    <Radio id="poly" type="radio" name="pivot" />
                    <ChoiceLabel htmlFor="poly">Poly Pivot (all significant temperatures for CDD and HDD)</ChoiceLabel>
                  </RadioRow>
                </RadioGroup>
              </Side>
              <Wide>
                <NumberGrid>
                  {bases.map((b) => (
                    <NumberField key={b.id} {...b} />
                  ))}
                </NumberGrid>
              </Wide>
            </Columns>
          </Advanced>
        </Panel>
        <Panel $grow />
      </Page>
    </>
  );
}
